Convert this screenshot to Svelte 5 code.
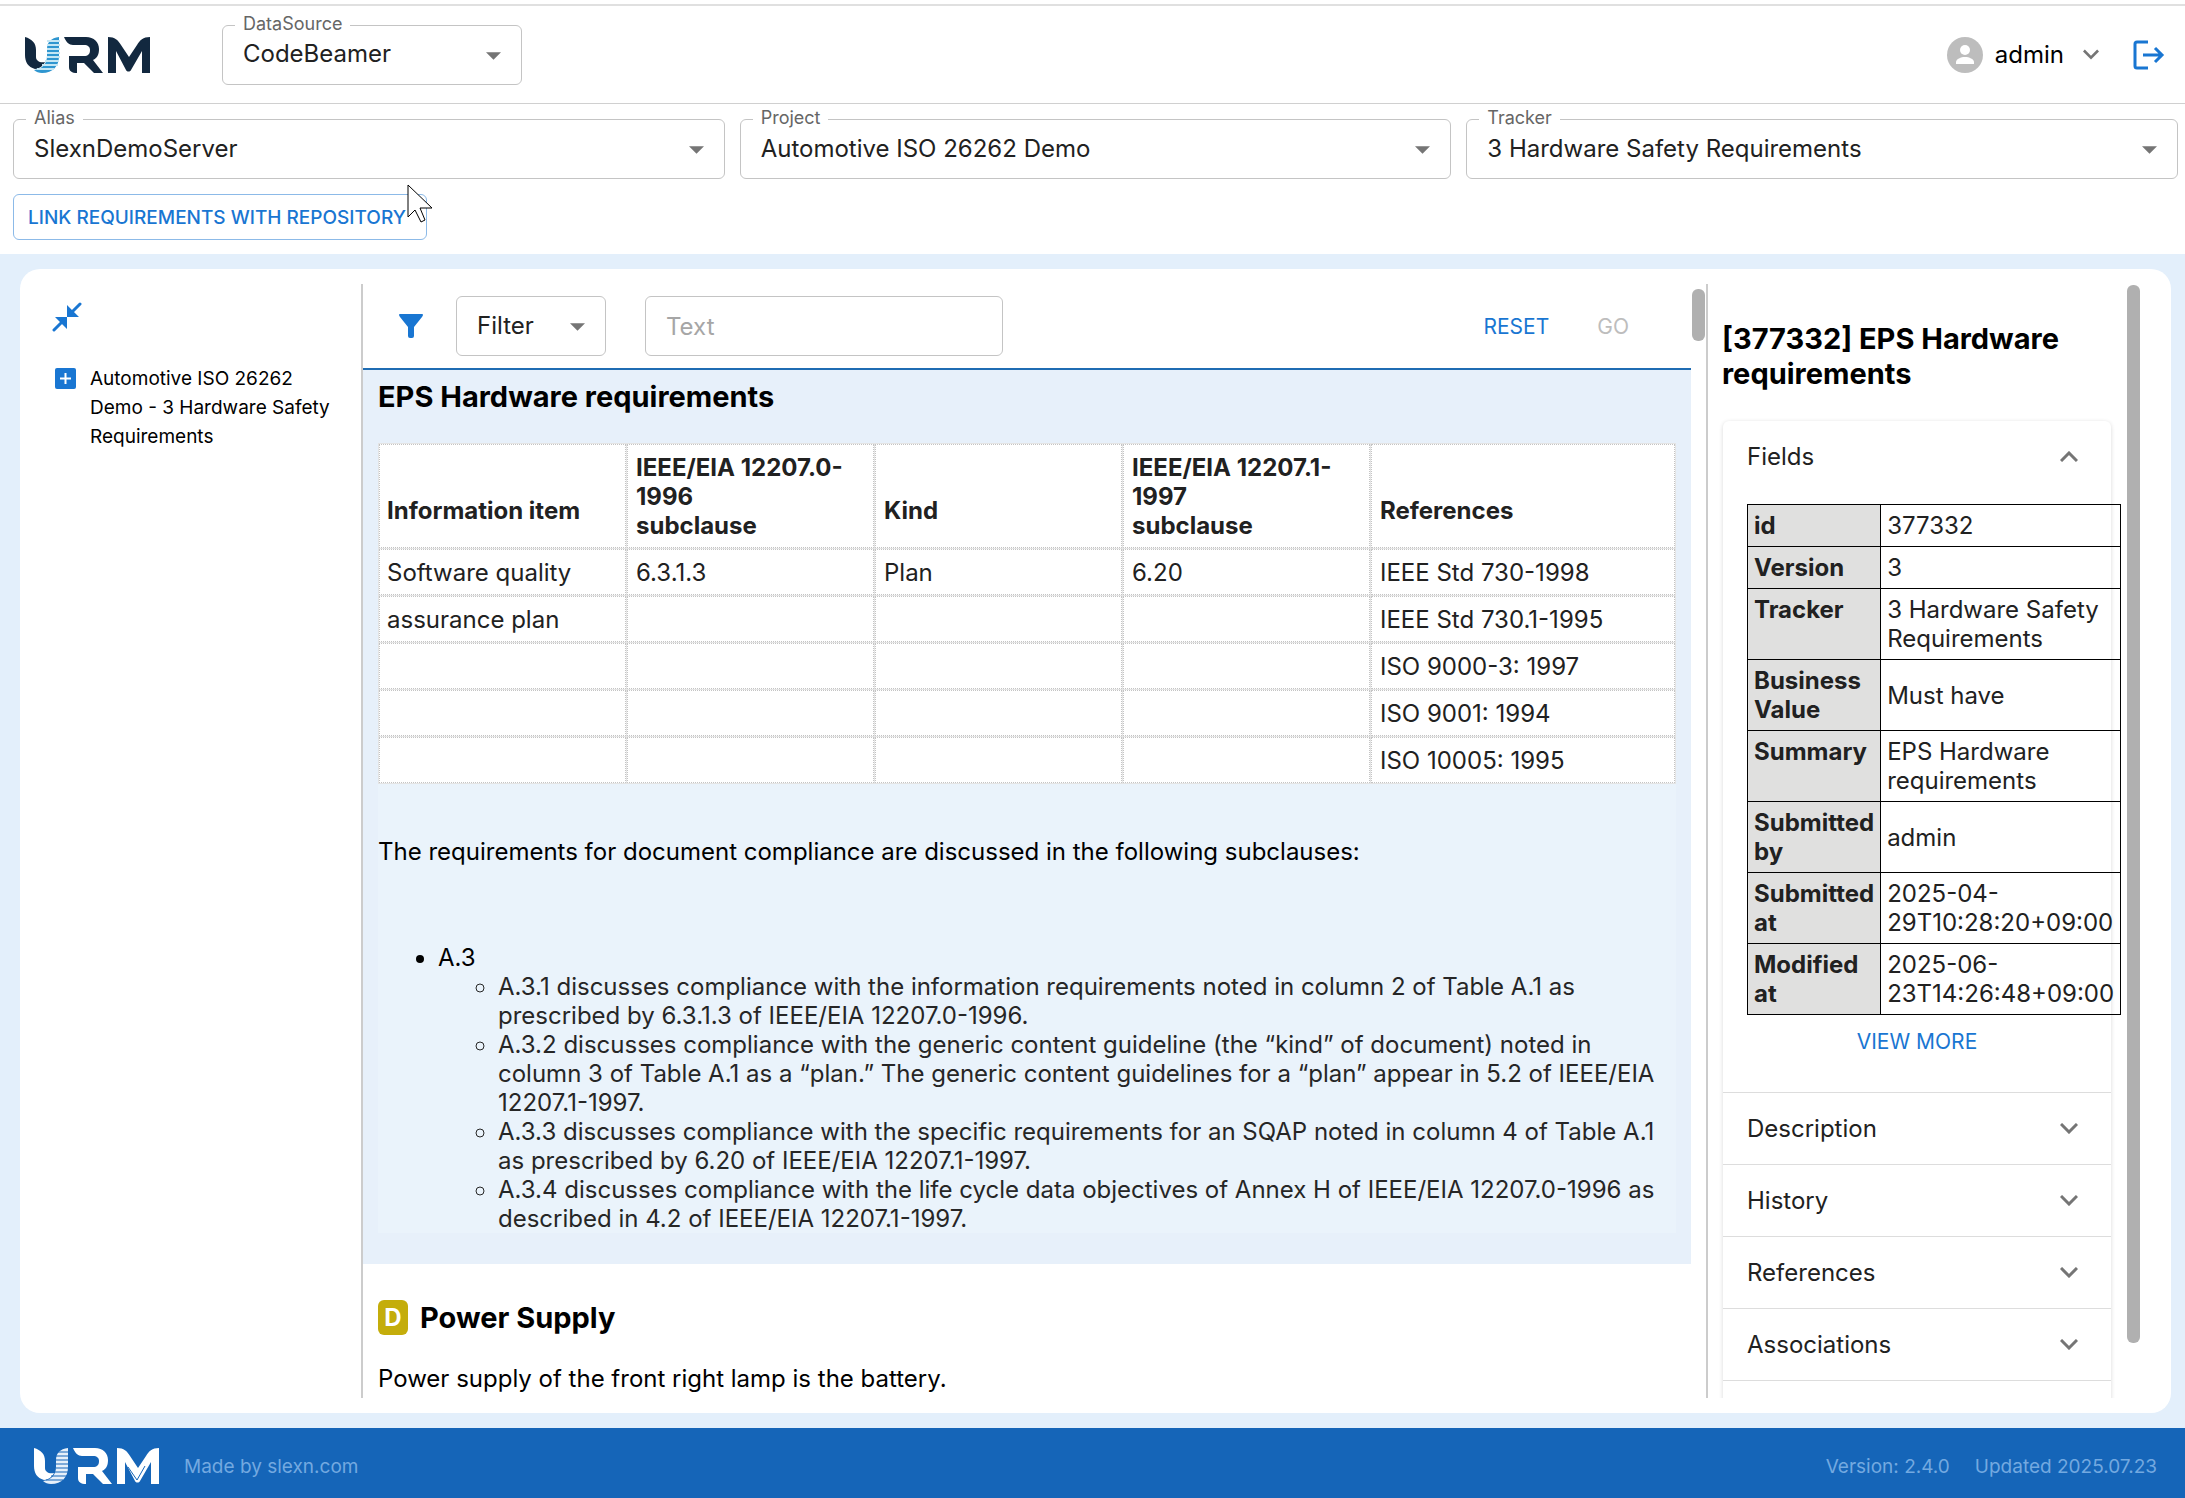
<script lang="ts">
	type Item = { name: string; text: string };

	let dataSource = $state('CodeBeamer');
	let filter = $state('Filter');
	let text = $state('');

	const selectors = [
		{ id: 'alias', label: 'Alias', value: 'SlexnDemoServer' },
		{ id: 'project', label: 'Project', value: 'Automotive ISO 26262 Demo' },
		{ id: 'tracker', label: 'Tracker', value: '3 Hardware Safety Requirements' }
	];

	const rows = [
		['Software quality', '6.3.1.3', 'Plan', '6.20', 'IEEE Std 730-1998'],
		['assurance plan', '', '', '', 'IEEE Std 730.1-1995'],
		['', '', '', '', 'ISO 9000-3: 1997'],
		['', '', '', '', 'ISO 9001: 1994'],
		['', '', '', '', 'ISO 10005: 1995']
	];

	const clauses = [
		'A.3.1 discusses compliance with the information requirements noted in column 2 of Table A.1 as prescribed by 6.3.1.3 of IEEE/EIA 12207.0-1996.',
		'A.3.2 discusses compliance with the generic content guideline (the “kind” of document) noted in column 3 of Table A.1 as a “plan.” The generic content guidelines for a “plan” appear in 5.2 of IEEE/EIA 12207.1-1997.',
		'A.3.3 discusses compliance with the specific requirements for an SQAP noted in column 4 of Table A.1 as prescribed by 6.20 of IEEE/EIA 12207.1-1997.',
		'A.3.4 discusses compliance with the life cycle data objectives of Annex H of IEEE/EIA 12207.0-1996 as described in 4.2 of IEEE/EIA 12207.1-1997.'
	];

	const fields: Item[] = [
		{ name: 'id', text: '377332' },
		{ name: 'Version', text: '3' },
		{ name: 'Tracker', text: '3 Hardware Safety Requirements' },
		{ name: 'Business Value', text: 'Must have' },
		{ name: 'Summary', text: 'EPS Hardware requirements' },
		{ name: 'Submitted by', text: 'admin' },
		{ name: 'Submitted at', text: '2025-04-29T10:28:20+09:00' },
		{ name: 'Modified at', text: '2025-06-23T14:26:48+09:00' }
	];

	const sections = ['Description', 'History', 'References', 'Associations'];
</script>

{#snippet logo(light: boolean)}
	<svg class="logo" class:light viewBox="0 0 125 36" role="img" aria-label="URM">
		<path class="ink" d="M0 0c7 2 11 6 11 13v7c0 4 4 6 9 5-2 4-6 7-10 7C3 30 0 25 0 18z" />
		<path class="ribbon" d="M34 0v19c0 10-6 17-17 17-3 0-6-1-8-3 8-1 13-6 13-14v-7C22 5 26 1 34 0z" />
		<path class="gaps" d="M22 4h13M22 8h13M22 12h13M22 16h13M22 20h13M20 24h14M17 28h16M12 32h17" />
		<path class="ink" d="M39 0h22c8 0 13 5 13 12 0 6-2 9-6 11l10 13h-9L59 26h-7v10c-5 0-8-2-8-6V19h15c4 0 6-2 6-6 0-3-2-5-6-5H48c-4 0-7-3-9-8z" />
		<path class="ink" d="M83 0c7 0 10 3 13 8l8 12 8-12c3-5 6-8 13-8v36h-8V14l-11 19c-1 2-4 2-5 0L91 14v22h-8z" />
		{#if light}
			<path class="gaps" d="M94 19l9 13 8-14" />
		{/if}
	</svg>
{/snippet}

{#snippet caret()}
	<svg class="caret" viewBox="0 0 14 7" aria-hidden="true"><path d="M0 0h14L7 7z" /></svg>
{/snippet}

{#snippet chevron(up: boolean)}
	<svg class="chevron" class:up viewBox="0 0 18 11" aria-hidden="true"><path d="M1 1l8 8 8-8" /></svg>
{/snippet}

<div class="page">
	<header class="top">
		{@render logo(false)}
		<div class="field source">
			<label for="source">DataSource</label>
			<select id="source" bind:value={dataSource}>
				<option>CodeBeamer</option>
			</select>
			{@render caret()}
		</div>
		<button class="user" type="button">
			<svg class="avatar" viewBox="0 0 36 36" aria-hidden="true">
				<circle cx="18" cy="18" r="18" fill="#bdbdbd" />
				<circle cx="18" cy="13" r="5" fill="#fff" />
				<path d="M9 27v-2c0-3 5-5 9-5s9 2 9 5v2z" fill="#fff" />
			</svg>
			<span>admin</span>
			{@render chevron(false)}
		</button>
		<button class="icon logout" type="button" aria-label="Log out">
			<svg viewBox="0 0 32 30" width="32" height="30" aria-hidden="true">
				<path d="M15 2H4Q2 2 2 4v22q0 2 2 2h11M10 15h19M22 8l7 7-7 7" />
			</svg>
		</button>
	</header>

	<section class="selectors">
		<div class="row">
			{#each selectors as s (s.id)}
				<div class="field">
					<label for={s.id}>{s.label}</label>
					<select id={s.id}>
						<option>{s.value}</option>
					</select>
					{@render caret()}
				</div>
			{/each}
		</div>
		<button class="link-btn" type="button">
			LINK REQUIREMENTS WITH REPOSITORY
			<svg class="pointer" viewBox="0 0 26 40" aria-hidden="true">
				<path d="M1 1v32l7-7 6 12 4-2-5-12h12z" />
			</svg>
		</button>
	</section>

	<main>
		<div class="card">
			<aside class="tree">
				<button class="icon" type="button" aria-label="Collapse all">
					<svg viewBox="0 0 30 30" width="30" height="30" aria-hidden="true">
						<path d="M15 3v12h12zM15 27V15H3z" fill="#1976d2" />
						<path d="M28 2l-9 9M2 28l9-9" stroke="#1976d2" stroke-width="3" stroke-linecap="round" />
					</svg>
				</button>
				<div class="node">
					<button class="icon" type="button" aria-label="Expand">
						<svg viewBox="0 0 21 21" width="21" height="21" aria-hidden="true">
							<rect width="21" height="21" rx="2" fill="#1976d2" />
							<path d="M5 10.5h11M10.5 5v11" stroke="#fff" stroke-width="2" />
						</svg>
					</button>
					<span>Automotive ISO 26262 Demo - 3 Hardware Safety Requirements</span>
				</div>
			</aside>

			<section class="doc">
				<div class="toolbar">
					<svg class="funnel" viewBox="0 0 24 24" aria-hidden="true">
						<path d="M1 0h22q2 0 0 3l-8 10v9q0 2-2 2h-2q-2 0-2-2v-9L1 3q-2-3 0-3z" fill="#1976d2" />
					</svg>
					<div class="field filter">
						<select aria-label="Filter" bind:value={filter}>
							<option>Filter</option>
						</select>
						{@render caret()}
					</div>
					<input class="search" type="text" placeholder="Text" aria-label="Text" bind:value={text} />
					<button class="text-btn reset" type="button">RESET</button>
					<button class="text-btn" type="button" disabled>GO</button>
				</div>
				<div class="scroll">
					<article class="selected">
						<h2>EPS Hardware requirements</h2>
						<div class="content">
							<table class="wiki">
								<thead>
									<tr>
										<th>Information item</th>
										<th>IEEE/EIA 12207.0-1996<br />subclause</th>
										<th>Kind</th>
										<th>IEEE/EIA 12207.1-1997<br />subclause</th>
										<th>References</th>
									</tr>
								</thead>
								<tbody>
									{#each rows as row}
										<tr>
											{#each row as cell}
												<td>{cell}</td>
											{/each}
										</tr>
									{/each}
								</tbody>
							</table>
							<p>The requirements for document compliance are discussed in the following subclauses:</p>
							<ul>
								<li>
									A.3
									<ul>
										{#each clauses as clause}
											<li>{clause}</li>
										{/each}
									</ul>
								</li>
							</ul>
						</div>
					</article>
					<article>
						<h2><span class="badge">D</span>Power Supply</h2>
						<p class="summary">Power supply of the front right lamp is the battery.</p>
					</article>
				</div>
				<span class="thumb"></span>
			</section>

			<aside class="detail">
				<h2>[377332] EPS Hardware requirements</h2>
				<div class="accordion">
					<div class="panel">
						<button class="summary-btn" type="button" aria-expanded="true">
							Fields {@render chevron(true)}
						</button>
						<div class="panel-body">
							<table class="fields">
								<tbody>
									{#each fields as f (f.name)}
										<tr>
											<th scope="row">{f.name}</th>
											<td>{f.text}</td>
										</tr>
									{/each}
								</tbody>
							</table>
							<button class="text-btn" type="button">VIEW MORE</button>
						</div>
					</div>
					{#each sections as name (name)}
						<div class="panel">
							<button class="summary-btn" type="button" aria-expanded="false">
								{name} {@render chevron(false)}
							</button>
						</div>
					{/each}
					<div class="panel"></div>
				</div>
				<span class="thumb"></span>
			</aside>
		</div>
	</main>

	<footer>
		{@render logo(true)}
		<span>Made by slexn.com</span>
		<span class="version">Version: 2.4.0</span>
		<span>Updated 2025.07.23</span>
	</footer>
</div>

<style>
	:global(body) {
		background: #fff;
	}
	.page {
		display: flex;
		flex-direction: column;
		height: 100vh;
		overflow: hidden;
		box-sizing: border-box;
		padding-top: 4px;
		font-family: Inter, 'Liberation Sans', sans-serif;
		font-size: 24px;
		line-height: 29px;
		color: #000;
	}
	.page :global(*) {
		box-sizing: border-box;
	}
	button,
	input,
	select {
		font: inherit;
		color: inherit;
		margin: 0;
	}
	button {
		border: none;
		background: none;
		padding: 0;
		cursor: pointer;
	}
	svg {
		display: block;
		flex: none;
	}
	.top {
		display: flex;
		align-items: center;
		height: 100px;
		flex: none;
		padding: 0 20px 0 25px;
		border-top: 2px solid #e0e0e0;
		border-bottom: 1px solid #d0d0d0;
	}
	.logo {
		width: 125px;
		height: 36px;
	}
	.ink {
		fill: #12283f;
	}
	.ribbon {
		fill: #2f96d0;
	}
	.gaps {
		fill: none;
		stroke: #c4e6f4;
		stroke-width: 2;
	}
	.light .ink {
		fill: #fff;
	}
	.light .ribbon {
		fill: #e6f0fa;
	}
	.light .gaps {
		stroke: #1565b8;
		stroke-width: 1;
	}
	.field {
		position: relative;
		flex: 1;
		min-width: 0;
	}
	.field label {
		position: absolute;
		top: -12px;
		left: 13px;
		padding: 0 8px;
		background: #fff;
		color: #666;
		font-size: 18px;
		line-height: 22px;
	}
	select,
	.search {
		display: block;
		width: 100%;
		height: 60px;
		padding: 0 60px 2px 20px;
		border: 1px solid #c4c4c4;
		border-radius: 6px;
		background: #fff;
		appearance: none;
		color: #212121;
	}
	.caret {
		position: absolute;
		right: 21px;
		top: 27px;
		width: 15px;
		height: 8px;
		fill: #757575;
		pointer-events: none;
	}
	.source {
		flex: 0 0 300px;
		margin-left: 72px;
	}
	.chevron {
		width: 18px;
		height: 11px;
		fill: none;
		stroke: #757575;
		stroke-width: 3;
	}
	.chevron.up {
		transform: rotate(180deg);
	}
	.user {
		display: flex;
		align-items: center;
		gap: 12px;
		margin-left: auto;
	}
	.user .chevron {
		width: 16px;
		margin-left: 7px;
	}
	.avatar {
		width: 36px;
		height: 36px;
	}
	.logout {
		margin-left: 34px;
	}
	.logout path {
		fill: none;
		stroke: #1976d2;
		stroke-width: 3;
	}
	.selectors {
		flex: none;
		padding: 15px 7px 14px 13px;
	}
	.row {
		display: flex;
		gap: 15px;
	}
	.link-btn {
		position: relative;
		display: block;
		height: 46px;
		margin-top: 15px;
		padding: 0 20px 0 14px;
		border: 1px solid #8cbae8;
		border-radius: 6px;
		color: #1976d2;
		font-size: 19px;
		font-weight: 500;
	}
	.pointer {
		position: absolute;
		left: 393px;
		top: -11px;
		width: 26px;
		height: 40px;
		fill: #fff;
		stroke: #000;
		stroke-width: 1;
	}
	main {
		display: flex;
		flex: 1;
		min-height: 0;
		padding: 15px 14px 15px 20px;
		background: #e3effb;
	}
	.card {
		display: flex;
		flex: 1;
		min-width: 0;
		padding: 15px 0;
		border-radius: 20px;
		background: #fff;
	}
	.tree {
		flex: 0 0 341px;
		padding: 18px 20px 0 32px;
		font-size: 19px;
	}
	.node {
		display: flex;
		gap: 14px;
		margin: 24px 0 0 3px;
	}
	.node .icon {
		flex: none;
		align-self: flex-start;
		margin-top: 4px;
	}
	.doc {
		position: relative;
		display: flex;
		flex: 1;
		flex-direction: column;
		min-width: 0;
		border-left: 2px solid #ccc;
		border-right: 2px solid #ccc;
		padding-right: 15px;
	}
	.toolbar {
		display: flex;
		align-items: center;
		flex: none;
		height: 86px;
		padding: 0 62px 0 36px;
		border-bottom: 2px solid #1f6cb3;
	}
	.funnel {
		width: 24px;
		height: 24px;
	}
	.filter {
		flex: 0 0 150px;
		margin-left: 33px;
	}
	.search {
		width: 358px;
		margin: 0 auto 0 39px;
		padding: 0 20px;
	}
	.search::placeholder {
		color: #a6a6a6;
		opacity: 1;
	}
	.text-btn {
		color: #1976d2;
		font-size: 21px;
	}
	.text-btn:disabled {
		color: #bdbdbd;
	}
	.reset {
		margin-right: 48px;
	}
	.scroll {
		flex: 1;
		min-height: 0;
		overflow: hidden;
	}
	h2 {
		margin: 0;
		font-size: 29px;
		line-height: 35px;
		font-weight: 700;
	}
	article {
		padding: 36px 15px;
	}
	.selected {
		padding: 9px 15px 31px;
		background: #e7f0fa;
	}
	.content {
		margin-top: 29px;
		background: #eaf3fb;
	}
	.wiki {
		width: 100%;
		border-collapse: separate;
		border-spacing: 1px;
		table-layout: fixed;
		background: #e4e4e4;
		color: #212121;
	}
	.wiki th,
	.wiki td {
		height: 46px;
		padding: 7px;
		border: 1px dotted #c4c4c4;
		background: #fff;
		text-align: left;
	}
	.wiki th {
		height: 104px;
		width: 247px;
	}
	.wiki th:not(:nth-child(even)) {
		padding-top: 36px;
	}
	.wiki th:last-child {
		width: auto;
	}
	.wiki th + th,
	.wiki td + td {
		padding-left: 8px;
	}
	.content p {
		margin: 0;
		padding: 53px 0 77px;
	}
	ul {
		margin: 0;
		padding-left: 60px;
	}
	ul ul {
		color: #262626;
	}
	.badge {
		display: inline-block;
		width: 30px;
		height: 35px;
		margin-right: 12px;
		border-radius: 6px;
		background: #c4ad0b;
		color: #fff;
		font-size: 24px;
		text-align: center;
		vertical-align: top;
	}
	.summary {
		margin: 29px 0 0;
	}
	.thumb {
		position: absolute;
		top: 5px;
		right: 1px;
		width: 13px;
		height: 52px;
		border-radius: 6px;
		background: #b0b0b0;
	}
	.detail {
		position: relative;
		flex: 0 0 463px;
		overflow: hidden;
		padding: 37px 60px 0 14px;
	}
	.detail h2 {
		padding-bottom: 30px;
	}
	.detail .thumb {
		top: 1px;
		right: 31px;
		height: 95%;
	}
	.accordion {
		margin-left: 1px;
		border-radius: 6px 6px 0 0;
		box-shadow: 0 1px 4px rgba(0, 0, 0, 0.16);
		color: #212121;
	}
	.panel {
		border-bottom: 1px solid #ddd;
	}
	.panel:last-child {
		height: 100px;
	}
	.summary-btn {
		display: flex;
		align-items: center;
		justify-content: space-between;
		width: 100%;
		height: 71px;
		padding: 0 33px 0 24px;
	}
	.panel-body {
		display: flex;
		flex-direction: column;
		align-items: center;
		padding: 12px 24px 36px;
	}
	.fields {
		align-self: flex-start;
		width: 374px;
		border-collapse: collapse;
	}
	.fields th,
	.fields td {
		padding: 6px;
		border: 1px solid #000;
		text-align: left;
	}
	.fields th {
		width: 133px;
		background: #e0e0df;
		vertical-align: top;
	}
	.panel-body .text-btn {
		margin-top: 12px;
	}
	footer {
		display: flex;
		align-items: center;
		flex: none;
		gap: 25px;
		height: 70px;
		padding: 6px 28px 0 34px;
		background: #1565b8;
		color: #73a9e0;
		font-size: 19px;
	}
	.version {
		margin-left: auto;
	}
</style>
